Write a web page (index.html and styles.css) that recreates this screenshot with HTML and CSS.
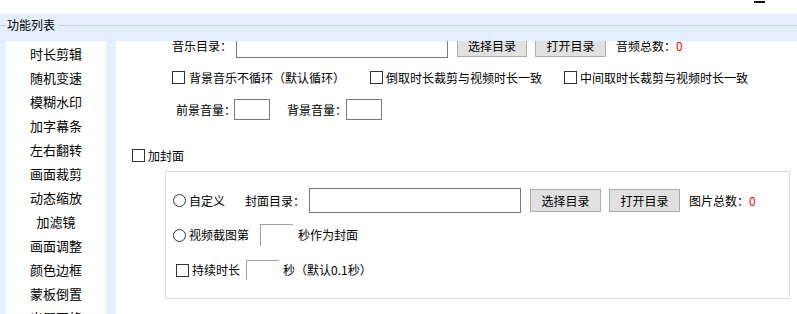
FILE: index.html
```html
<!DOCTYPE html>
<html>
<head>
	<meta charset="utf-8">
	<title>功能列表</title>
	<link rel="stylesheet" href="styles.css">
</head>
<body>
	<div class="titlebar"><span class="min-btn"></span></div>
	<div class="window">
		<div class="group-title">
			<i class="rule rule-start"></i>
			<span class="group-name">功能列表</span>
			<i class="rule"></i>
		</div>
		<div class="main">
			<ul class="menu">
				<li>时长剪辑</li>
				<li>随机变速</li>
				<li>模糊水印</li>
				<li>加字幕条</li>
				<li>左右翻转</li>
				<li>画面裁剪</li>
				<li>动态缩放</li>
				<li>加滤镜</li>
				<li>画面调整</li>
				<li>颜色边框</li>
				<li>蒙板倒置</li>
				<li>出屏网格</li>
			</ul>
			<div class="content">
				<div class="scroll">
					<div class="row row-dir">
						<span class="dir-label">音乐目录：</span>
						<input class="path" type="text">
						<button class="btn btn-first">选择目录</button>
						<button class="btn">打开目录</button>
						<span class="count">音频总数：<em>0</em></span>
					</div>
					<div class="row row-loop">
						<label class="opt loop-1"><input type="checkbox"><span>背景音乐不循环（默认循环）</span></label>
						<label class="opt loop-2"><input type="checkbox"><span>倒取时长裁剪与视频时长一致</span></label>
						<label class="opt"><input type="checkbox"><span>中间取时长裁剪与视频时长一致</span></label>
					</div>
					<div class="row row-volume">
						<span class="vol-label">前景音量：</span>
						<input class="vol" type="text">
						<span class="vol-label vol-label-2">背景音量：</span>
						<input class="vol" type="text">
					</div>
					<div class="row row-cover">
						<label class="opt"><input type="checkbox"><span>加封面</span></label>
					</div>
					<div class="cover-box">
						<div class="row cover-dir">
							<label class="opt"><input type="radio" name="cover"><span>自定义</span></label>
							<span class="cover-label">封面目录：</span>
							<input class="path" type="text">
							<button class="btn btn-first">选择目录</button>
							<button class="btn">打开目录</button>
							<span class="count">图片总数：<em>0</em></span>
						</div>
						<div class="row cover-shot">
							<label class="opt"><input type="radio" name="cover"><span>视频截图第</span></label>
							<input class="spin spin-shot" type="text">
							<span class="unit">秒作为封面</span>
						</div>
						<div class="row cover-time">
							<label class="opt"><input type="checkbox"><span>持续时长</span></label>
							<input class="spin spin-time" type="text">
							<span class="unit unit-time">秒（默认0.1秒）</span>
						</div>
					</div>
				</div>
			</div>
		</div>
	</div>
</body>
</html>
```

FILE: styles.css
```css
*{
	margin:0;
	padding:0;
	box-sizing:border-box;
}
body{
	width:797px;
	height:314px;
	overflow:hidden;
	background:#fff;
	color:#000;
	font-family:"Microsoft YaHei","Noto Sans CJK SC",sans-serif;
	font-size:12px;
	line-height:16px;
}

.titlebar{
	height:14px;
	display:flex;
	justify-content:flex-end;
	padding-right:32px;
}
.min-btn{
	width:11px;
	height:2px;
	margin-top:1px;
	background:#111;
}

.window{
	height:300px;
	background:#e3effc;
}

.group-title{
	height:22px;
	margin-bottom:5px;
	display:flex;
	align-items:center;
}
.rule{
	flex:1;
	height:1px;
	background:#d3d3d3;
}
.rule-start{
	flex:none;
	width:6px;
}
.group-name{
	padding:0 4px 0 1px;
}

.main{
	display:flex;
	gap:10px;
	height:273px;
	padding-left:6px;
}

.menu{
	list-style:none;
	width:100px;
	padding-top:1px;
	background:#fff;
	overflow:hidden;
	font-size:13px;
}
.menu li{
	height:24px;
	line-height:24px;
	text-align:center;
}

.content{
	flex:1;
	background:#fff;
	overflow:hidden;
}
.scroll{
	margin-top:-8px;
}

.row{
	display:flex;
	align-items:center;
	white-space:nowrap;
}

.path{
	width:212px;
	height:25px;
	border:1px solid #7a7a7a;
	background:#fff;
}
.btn{
	width:71px;
	height:23px;
	margin-left:8px;
	border:1px solid #adadad;
	background:#e1e1e1;
	color:#000;
	font:inherit;
}
.btn-first{
	margin-left:9px;
}
.count{
	margin-left:9px;
}
.count em{
	font-style:normal;
	color:#f00;
}

/* 音乐 */
.row-dir{
	height:25px;
	padding-left:56px;
}
.dir-label{
	margin-right:4px;
}
.row-dir .btn-first{
	width:70px;
}
.row-dir .count{
	margin-left:10px;
}

.opt{
	display:flex;
	align-items:center;
}
.opt input{
	appearance:none;
	-webkit-appearance:none;
	flex:none;
	width:13px;
	height:13px;
	margin:0 3px 0 0;
	border:1px solid #333;
	background:#fff;
}
.opt input[type=radio]{
	border-radius:50%;
}

.row-loop{
	height:19px;
	margin-top:10px;
	padding-left:56px;
}
.loop-1 input{
	margin-right:4px;
}
.loop-1{
	width:198px;
}
.loop-2{
	width:194px;
}

.row-volume{
	height:21px;
	margin-top:12px;
	padding-left:60px;
}
.vol-label{
	width:58px;
}
.vol-label-2{
	width:59px;
	margin-left:17px;
}
.vol{
	width:36px;
	height:21px;
	border:1px solid #7a7a7a;
}

/* 封面 */
.row-cover{
	height:15px;
	margin-top:28px;
	padding-left:16px;
}

.cover-box{
	height:128px;
	margin:8px 7px 0 49px;
	padding:16px 0 0 7px;
	border:1px solid #dcdcdc;
}
.cover-dir{
	height:25px;
}
.cover-label{
	margin-left:20px;
	margin-right:4px;
}
.cover-shot{
	height:22px;
	margin-top:11px;
}
.cover-time{
	height:20px;
	margin-top:14px;
	padding-left:3px;
}

.spin{
	width:33px;
	border:none;
	border-top:1px solid #a0a0a0;
	border-left:1px solid #a0a0a0;
	background:#fff;
}
.spin-shot{
	height:22px;
	margin-left:11px;
}
.spin-time{
	height:20px;
	margin-left:6px;
}
.unit{
	margin-left:5px;
}
.unit-time{
	margin-left:4px;
}
```
